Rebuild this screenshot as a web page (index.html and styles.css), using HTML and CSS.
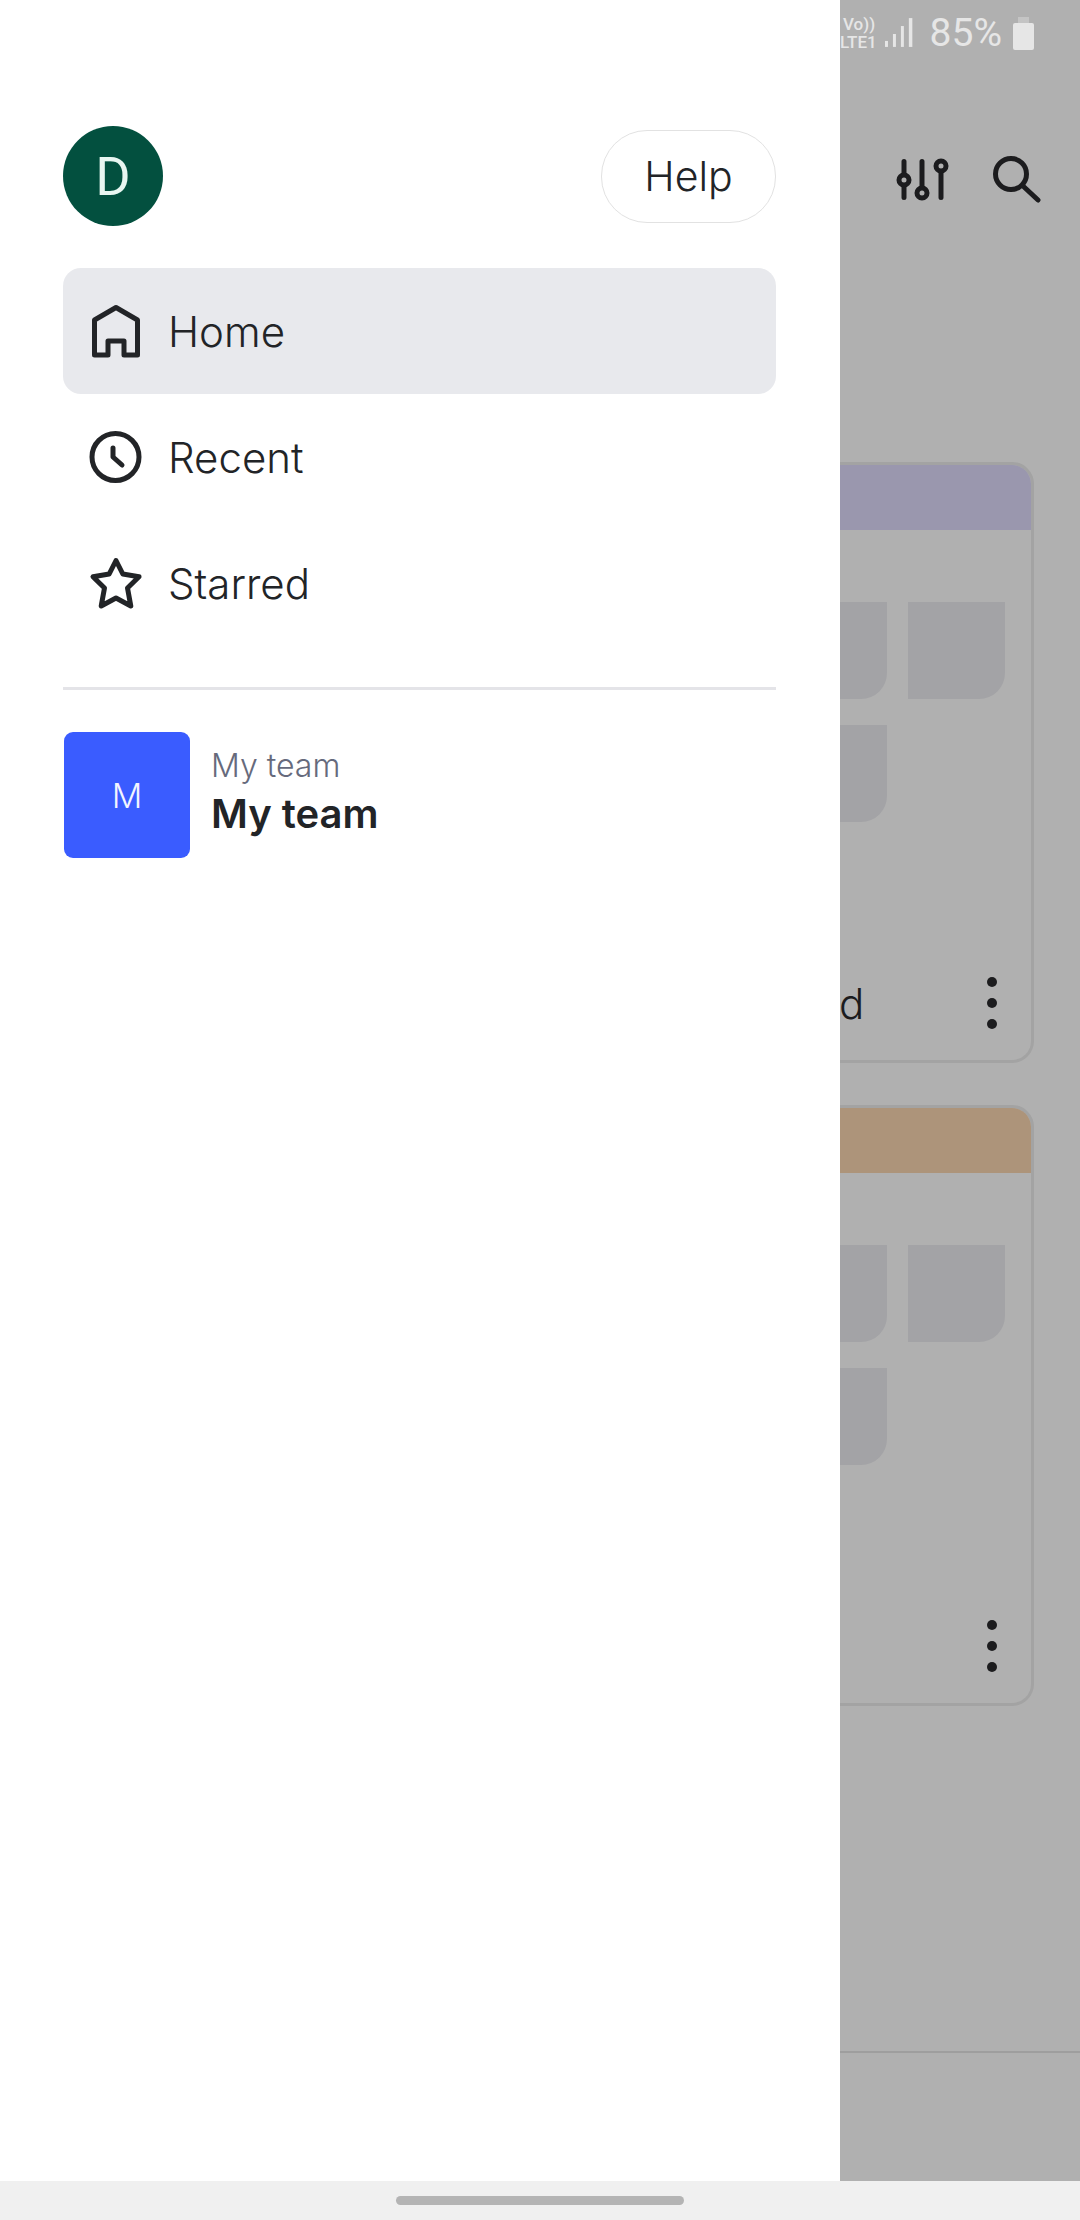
FILE: index.html
```html
<!doctype html>
<html lang="en-us">

<head>
    <title>My team</title>
    <link rel="stylesheet" href="styles.css">
</head>

<body>
    <div id="screen">
        <div id="drawer">
            <div class="drawer-head">
                <div class="avatar">D</div>
                <div class="help-btn">Help</div>
            </div>

            <div class="nav-row active">
                <svg class="nav-icon" viewBox="0 0 54 54" fill="none" stroke="#222427" stroke-width="5" stroke-linejoin="round">
                    <path d="M5.5 51 V16 L27 3.5 L48.5 16 V51 H35 V37 H19 V51 Z" />
                </svg>
                <span>Home</span>
            </div>
            <div class="nav-row">
                <svg class="nav-icon" viewBox="0 0 54 54" fill="none" stroke="#222427" stroke-width="5" stroke-linecap="round" stroke-linejoin="round">
                    <circle cx="26.5" cy="27" r="23.5" />
                    <path d="M24 18 V27 L33 35" />
                </svg>
                <span>Recent</span>
            </div>
            <div class="nav-row">
                <svg class="nav-icon" viewBox="0 0 54 54" fill="none" stroke="#222427" stroke-width="5" stroke-linejoin="round">
                    <path d="M27 4.5 L33.8 18 L50 20.8 L38.5 32 L41.8 50 L27 42 L12.2 50 L15.5 32 L4 20.8 L20.2 18 Z" />
                </svg>
                <span>Starred</span>
            </div>

            <hr class="divider">

            <div class="team">
                <div class="team-logo">M</div>
                <div class="team-text">
                    <div class="team-sub">My team</div>
                    <div class="team-name">My team</div>
                </div>
            </div>
        </div>

        <div id="behind">
            <div class="status-bar">
                <div class="volte">
                    <span class="vo">Vo))</span>
                    <span>LTE1</span>
                </div>
                <svg class="signal" width="28" height="30" viewBox="0 0 28 30" fill="#e6e6e6">
                    <rect x="0" y="23" width="3" height="6" />
                    <rect x="8" y="16" width="3" height="13" />
                    <rect x="16" y="8" width="3" height="21" />
                    <rect x="24" y="0" width="3.5" height="29" />
                </svg>
                <span class="battery-pct">85%</span>
                <div class="battery">
                    <div class="battery-nub"></div>
                    <div class="battery-body"></div>
                </div>
            </div>

            <div class="toolbar">
                <svg width="54" height="44" viewBox="0 0 54 44" fill="none" stroke="#1c1c1e" stroke-width="5" stroke-linecap="round">
                    <path d="M9 3.5 V15 M9 29 V39.5 M27 3.5 V28 M46 15 V39.5" />
                    <circle cx="9" cy="22" r="5" />
                    <circle cx="27" cy="35" r="5" />
                    <circle cx="46" cy="8" r="5" />
                </svg>
                <svg width="48" height="48" viewBox="0 0 48 48" fill="none" stroke="#1c1c1e" stroke-width="5" stroke-linecap="round">
                    <circle cx="18" cy="18" r="15.5" />
                    <path d="M30 30 L45 44" />
                </svg>
            </div>

            <div class="card purple">
                <div class="card-head"></div>
                <div class="thumbs">
                    <div class="thumb"></div>
                    <div class="thumb"></div>
                    <div class="thumb"></div>
                </div>
                <div class="card-foot">
                    <span class="card-title">d</span>
                    <div class="dots"><i></i><i></i><i></i></div>
                </div>
            </div>

            <div class="card tan">
                <div class="card-head"></div>
                <div class="thumbs">
                    <div class="thumb"></div>
                    <div class="thumb"></div>
                    <div class="thumb"></div>
                </div>
                <div class="card-foot">
                    <span class="card-title"></span>
                    <div class="dots"><i></i><i></i><i></i></div>
                </div>
            </div>

            <div class="tab-line"></div>
        </div>
    </div>

    <div class="nav-bar">
        <div class="home-pill"></div>
    </div>
</body>

</html>
```

FILE: styles.css
```css
html, body {
    margin: 0;
    padding: 0;
}

body {
    width: 1080px;
    height: 2220px;
    overflow: hidden;
    background: #f0f0f0;
    font-family: Inter, "Liberation Sans", sans-serif;
    color: #222427;
}

#screen {
    display: flex;
    height: 2181px;
}

/* drawer */
#drawer {
    width: 840px;
    box-sizing: border-box;
    padding: 126px 64px 0 63px;
    background: #fff;
}

.drawer-head {
    display: flex;
    justify-content: space-between;
    align-items: center;
    height: 100px;
    margin-bottom: 42px;
}

.avatar {
    width: 100px;
    height: 100px;
    border-radius: 50%;
    background: #03503f;
    color: #e8f6f1;
    display: flex;
    align-items: center;
    justify-content: center;
    font-family: Roboto, sans-serif;
    font-size: 54px;
}

.help-btn {
    width: 175px;
    height: 93px;
    box-sizing: border-box;
    border: 1px solid #e2e2e2;
    border-radius: 46px;
    display: flex;
    align-items: center;
    justify-content: center;
    font-size: 41px;
    font-weight: 300;
}

.nav-row {
    display: flex;
    align-items: center;
    height: 126px;
    padding-left: 26px;
    border-radius: 18px;
    font-size: 42px;
    font-weight: 300;
}

.nav-row.active {
    background: #e8e9ed;
}

.nav-icon {
    width: 54px;
    height: 54px;
    margin-right: 25px;
}

.divider {
    height: 3px;
    margin: 41px 0 42px;
    border: 0;
    background: #e4e4e8;
}

.team {
    display: flex;
    align-items: center;
}

.team-logo {
    width: 126px;
    height: 126px;
    margin-left: 1px;
    border-radius: 9px;
    background: #3a5cff;
    color: #f2f5ff;
    display: flex;
    align-items: center;
    justify-content: center;
    font-size: 34px;
    font-weight: 300;
}

.team-text {
    margin-left: 21px;
}

.team-sub {
    font-size: 32px;
    font-weight: 300;
    line-height: 38px;
    color: #666a7c;
}

.team-name {
    font-size: 40px;
    font-weight: 600;
    line-height: 58px;
}

/* page under the drawer, dimmed */
#behind {
    flex: 1;
    min-width: 0;
    overflow: hidden;
    background: #b0b0b0;
}

.status-bar {
    display: flex;
    justify-content: flex-end;
    align-items: center;
    height: 66px;
    padding-right: 46px;
    color: #e6e6e6;
    font-family: Roboto, sans-serif;
}

.volte {
    display: flex;
    flex-direction: column;
    align-items: flex-start;
    width: 37px;
    margin-right: 8px;
    font-size: 17px;
    font-weight: 500;
    line-height: 18px;
}

.volte span {
    white-space: nowrap;
}

.volte .vo {
    margin-left: 3px;
}

.signal {
    margin-right: 17px;
}

.battery-pct {
    font-size: 39px;
    margin-right: 11px;
}

.battery {
    display: flex;
    flex-direction: column;
    align-items: center;
    width: 21px;
}

.battery-nub {
    width: 11px;
    height: 6px;
    background: #c4c4c4;
}

.battery-body {
    width: 21px;
    height: 27px;
    border-radius: 2px;
    background: #e6e6e6;
}

.toolbar {
    display: flex;
    justify-content: flex-end;
    align-items: center;
    gap: 44px;
    height: 48px;
    margin-top: 90px;
    padding-right: 39px;
}

.card {
    box-sizing: border-box;
    height: 601px;
    margin: 0 46px 42px -200px;
    border: 3px solid #a3a3a3;
    border-radius: 22px;
    overflow: hidden;
}

.purple {
    margin-top: 258px;
}

.card-head {
    height: 65px;
}

.purple .card-head {
    background: #9a97ae;
}

.tan .card-head {
    background: #ad947a;
}

.thumbs {
    display: grid;
    grid-template-columns: repeat(2, 97px);
    gap: 25px 21px;
    justify-content: end;
    height: 220px;
    margin-top: 72px;
    margin-right: 26px;
}

.thumb {
    height: 97px;
    border-bottom-right-radius: 26px;
    background: #a3a3a6;
}

.card-foot {
    display: flex;
    justify-content: space-between;
    align-items: center;
    height: 66px;
    margin-top: 148px;
    padding-right: 34px;
    font-size: 42px;
    font-weight: 300;
    color: #1c1c1e;
}

.card-title {
    margin-left: 196px;
}

.dots {
    display: flex;
    flex-direction: column;
    gap: 11px;
}

.dots i {
    display: block;
    width: 10px;
    height: 10px;
    border-radius: 50%;
    background: #1c1c1e;
}

.tab-line {
    height: 2px;
    margin-top: 345px;
    background: #9e9e9e;
}

/* system nav */
.nav-bar {
    display: flex;
    justify-content: center;
    align-items: center;
    height: 39px;
}

.home-pill {
    width: 288px;
    height: 9px;
    border-radius: 5px;
    background: #b4b4b4;
}
```
